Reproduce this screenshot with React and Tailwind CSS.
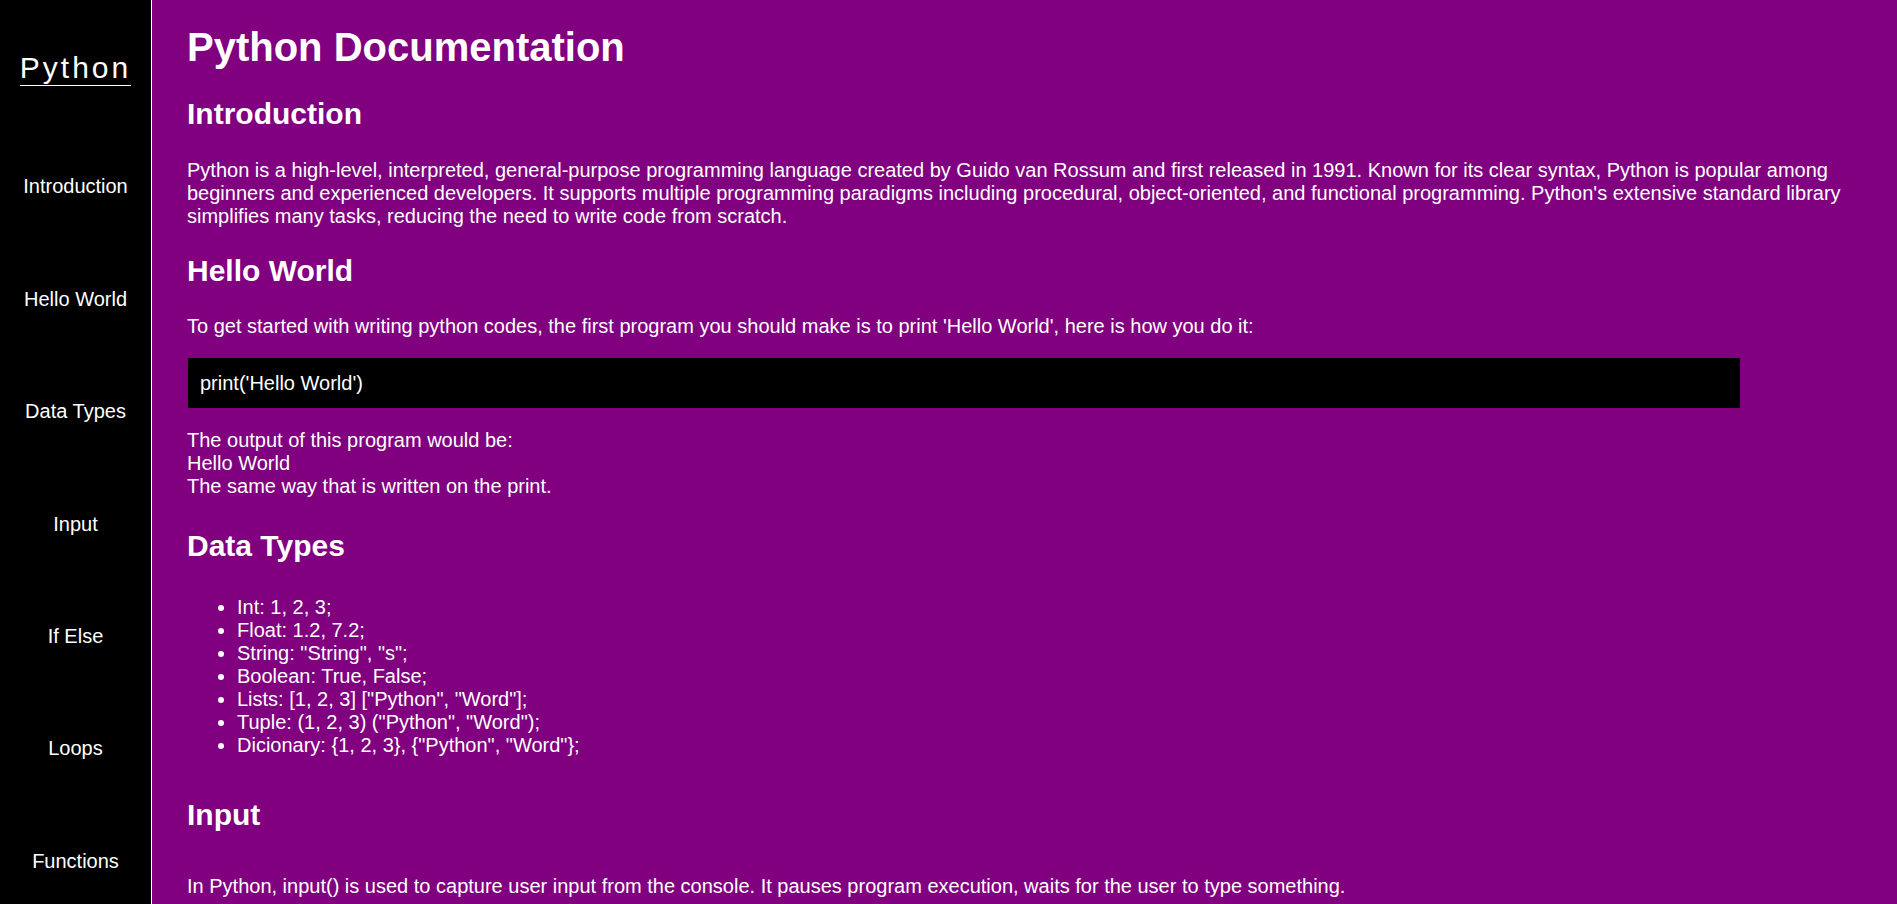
const navItems = ['Introduction', 'Hello World', 'Data Types', 'Input', 'If Else', 'Loops', 'Functions'];

const dataTypes = [
    'Int: 1, 2, 3;',
    'Float: 1.2, 7.2;',
    'String: "String", "s";',
    'Boolean: True, False;',
    'Lists: [1, 2, 3] ["Python", "Word"];',
    'Tuple: (1, 2, 3) ("Python", "Word");',
    'Dicionary: {1, 2, 3}, {"Python", "Word"};',
];

const App = () => {
    return (
        <div className="flex h-screen overflow-hidden font-['Liberation_Sans',Arial,sans-serif] text-white">
            {/* Sidebar */}
            <nav className="w-[152px] flex-shrink-0 bg-black border-r border-white flex flex-col items-center pt-[50px] gap-[89.4px]">
                <span className="inline-block text-[30px] leading-[35px] tracking-[3px] border-b border-white">Python</span>
                {navItems.map(item => (
                    <a key={item} href="#" className="block text-[20px] leading-[23px] text-white text-center">
                        {item}
                    </a>
                ))}
            </nav>

            {/* Main Content */}
            <main className="flex-1 bg-[#800080] pl-[35px] pr-[34px] pt-[24px] text-[20px] leading-[23px]">
                <h1 className="text-[40px] leading-[46px] font-bold">Python Documentation</h1>

                <h2 className="mt-[27px] text-[30px] leading-[34.5px] font-bold">Introduction</h2>
                <p className="mt-[27px]">
                    Python is a high-level, interpreted, general-purpose programming language created by Guido van Rossum and first released in 1991. Known for its clear syntax, Python is popular among beginners and experienced developers. It supports multiple programming paradigms including procedural, object-oriented, and functional programming. Python's extensive standard library simplifies many tasks, reducing the need to write code from scratch.
                </p>

                <h2 className="mt-[26px] text-[30px] leading-[34.5px] font-bold">Hello World</h2>
                <p className="mt-[27px]">
                    To get started with writing python codes, the first program you should make is to print 'Hello World', here is how you do it:
                </p>
                <div className="mt-[20px] ml-[1px] w-[1552px] bg-black px-[12px] py-[13.5px]">print('Hello World')</div>
                <p className="mt-[21px]">
                    The output of this program would be:
                    <br />
                    Hello World
                    <br />
                    The same way that is written on the print.
                </p>

                <h2 className="mt-[31px] text-[30px] leading-[34.5px] font-bold">Data Types</h2>
                <ul className="mt-[32px] list-disc pl-[50px]">
                    {dataTypes.map(t => (
                        <li key={t}>{t}</li>
                    ))}
                </ul>

                <h2 className="mt-[41px] text-[30px] leading-[34.5px] font-bold">Input</h2>
                <p className="mt-[43px]">
                    In Python, input() is used to capture user input from the console. It pauses program execution, waits for the user to type something.
                </p>
            </main>
        </div>
    );
};

export default App;
